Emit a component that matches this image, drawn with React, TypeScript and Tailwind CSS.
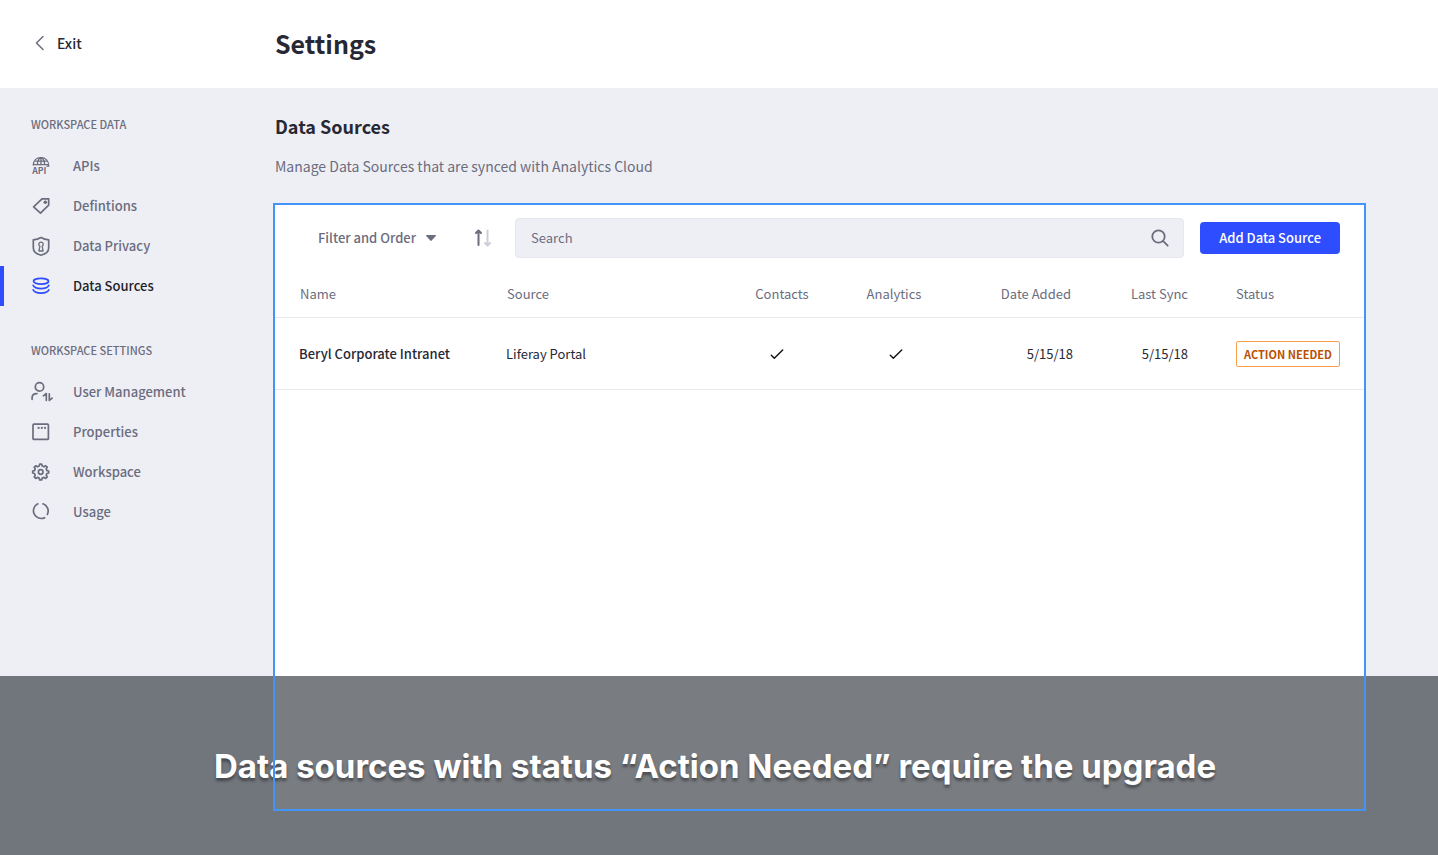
import type { ReactNode } from "react";

const strokeProps = {
  fill: "none",
  stroke: "currentColor",
  strokeWidth: 1.7,
  strokeLinecap: "round" as const,
  strokeLinejoin: "round" as const,
};

function Icon({ children }: { children: ReactNode }) {
  return (
    <svg width="24" height="24" viewBox="0 0 24 24" aria-hidden="true" className="shrink-0 overflow-visible" {...strokeProps}>
      {children}
    </svg>
  );
}

const ApiIcon = () => (
  <Icon>
    <g strokeWidth="1.3" strokeLinecap="butt">
      <path d="M4.2 11.4C4.2 6.6 7.5 3.7 12 3.7s7.8 3 7.8 8.5h-2.4" />
      <path d="M12 3.7v7.5M8.4 11.2c0-4 1.2-6.7 3.6-7.5M15.6 11.2c0-4-1.2-6.7-3.6-7.5M5.8 7.2h12.4M4.2 10.6h15.4" />
    </g>
    <text x="3.2" y="20" fill="currentColor" stroke="none" fontSize="8.6" fontWeight="700" className="font-['Noto_Sans_CJK_SC',sans-serif]">
      API
    </text>
  </Icon>
);

const TagIcon = () => (
  <Icon>
    <path d="M13 4.8h6.7v6.3l-8.2 8-6.900-6.300z" />
    <circle cx="16.3" cy="8.2" r="1.8" fill="currentColor" stroke="none" />
  </Icon>
);

const ShieldIcon = () => (
  <Icon>
    <path d="M12 3.5c2.4 1.5 5 2.2 7.7 2.3v8.1c0 3.7-3.3 6.1-7.7 7.3-4.4-1.2-7.7-3.6-7.7-7.3V5.8c2.7-.1 5.3-.8 7.700-2.300z" />
    <path d="M10.900 12.200a2.200 2.200 0 1 1 2.200 0l1 4.800H9.900z" strokeWidth="1.300" />
  </Icon>
);

const DatabaseIcon = () => (
  <Icon>
    <ellipse cx="12" cy="7.200" rx="7.500" ry="2.900" />
    <path d="M4.200 11.400c.9 2 3.800 3.200 7.800 3.200s6.900-1.200 7.800-3.200M4.200 15.900c.9 2 3.800 3.200 7.800 3.200s6.900-1.200 7.800-3.200" />
  </Icon>
);

const UserIcon = () => (
  <Icon>
    <circle cx="10.500" cy="6.900" r="4.200" />
    <path d="M3.100 19.300v-1.500c0-2.600 1.900-4.200 4.800-4.200" />
    <path d="M17.300 20.300v-6.800l-2.900 2.300M20.300 13.800v6.600l2.800-2.300" />
  </Icon>
);

const PropertiesIcon = () => (
  <Icon>
    <rect x="4" y="4.200" width="15.400" height="15.200" rx="1" />
    <g fill="currentColor" stroke="none">
      <circle cx="9.600" cy="7.900" r="1.100" />
      <circle cx="12.800" cy="7.900" r="1.100" />
      <circle cx="16" cy="7.900" r="1.100" />
    </g>
  </Icon>
);

const GearIcon = () => (
  <Icon>
    <g transform="translate(-.3 0)">
      <circle cx="12" cy="12" r="2.300" />
      <path d="M10.500 6 11 4.100h2l.5 1.900 1.800.8 1.700-1 1.500 1.400-1 1.700.7 1.700 1.800.4v2l-1.800.5-.7 1.700 1 1.700-1.500 1.500-1.700-1-1.800.7-.5 1.800h-2l-.5-1.800-1.800-.7-1.700 1-1.500-1.500 1-1.700-.7-1.700L4 13v-2l1.800-.4.7-1.700-1-1.700L7 5.800l1.700 1z" />
    </g>
  </Icon>
);

const UsageIcon = () => (
  <Icon>
    <path d="M8.800 3.800a7.700 7.700 0 1 0 6.800 13.900M14 3.800a7.700 7.700 0 0 1 4.400 10.600" />
  </Icon>
);

const CheckIcon = ({ label }: { label: string }) => (
  <svg width="14" height="12" viewBox="0 0 14 12" role="img" aria-label={label} className="inline-block" fill="none" stroke="#111" strokeWidth="1.400" strokeLinecap="round" strokeLinejoin="round">
    <path d="M1.300 6.300 4.300 9.200 12.700.9" />
  </svg>
);

type Item = { label: string; icon: () => ReactNode; active?: boolean };

const groups: { title: string; items: Item[] }[] = [
  {
    title: "WORKSPACE DATA",
    items: [
      { label: "APIs", icon: ApiIcon },
      { label: "Defintions", icon: TagIcon },
      { label: "Data Privacy", icon: ShieldIcon },
      { label: "Data Sources", icon: DatabaseIcon, active: true },
    ],
  },
  {
    title: "WORKSPACE SETTINGS",
    items: [
      { label: "User Management", icon: UserIcon },
      { label: "Properties", icon: PropertiesIcon },
      { label: "Workspace", icon: GearIcon },
      { label: "Usage", icon: UsageIcon },
    ],
  },
];

function Sidebar() {
  return (
    <nav aria-label="Settings" className="flex w-[275px] shrink-0 flex-col gap-9 pt-7">
      {groups.map((group) => (
        <section key={group.title}>
          <h3 className="mb-[14px] pl-[31px] text-[11px] leading-4 font-medium">{group.title}</h3>
          <ul>
            {group.items.map(({ label, icon: Glyph, active }) => (
              <li key={label}>
                <a
                  href="#"
                  aria-current={active ? "page" : undefined}
                  className={
                    active
                      ? "flex h-10 items-center gap-5 border-l-4 border-[#2e4dff] pl-[25px] text-[#2e4dff]"
                      : "flex h-10 items-center gap-5 border-l-4 border-transparent pl-[25px]"
                  }
                >
                  <Glyph />
                  <span className={active ? "text-[#1f1f2b]" : ""}>{label}</span>
                </a>
              </li>
            ))}
          </ul>
        </section>
      ))}
    </nav>
  );
}

function Toolbar() {
  return (
    <div className="flex items-center pt-[13px] pr-6 pb-[11px] pl-[43px]">
      <button type="button" className="flex items-center gap-[10px] font-medium whitespace-nowrap">
        Filter and Order
        <svg width="10" height="6" viewBox="0 0 10 6" fill="currentColor" aria-hidden="true">
          <path d="M.8 0h8.400c.7 0 1 .6.6 1.100L5.700 5.600a1 1 0 0 1-1.400 0L.2 1.100C-.2.6.1 0 .8 0z" />
        </svg>
      </button>
      <button type="button" aria-label="Sort order" className="ml-[38px]">
        <svg width="18" height="18" viewBox="0 0 18 18" fill="none" strokeWidth="2" strokeLinecap="round" strokeLinejoin="round">
          <path d="M4.500 16V2M2 4l2.500-2.500L7 4" stroke="#6b6c7e" />
          <path d="M13.500 1.500v14M11 14l2.500 2.500L16 14" stroke="#cdced9" />
        </svg>
      </button>
      <label className="ml-[23px] flex h-10 flex-1 items-center rounded-sm border border-[#e7e7ed] bg-[#eeeff4] pr-[14px] pl-[15px]">
        <span className="sr-only">Search</span>
        <input type="text" placeholder="Search" className="h-8 min-w-0 flex-1 bg-transparent leading-8 outline-none placeholder:text-[#6b6c7e]" />
        <svg width="18" height="18" viewBox="0 0 18 18" fill="none" stroke="currentColor" strokeWidth="1.800" strokeLinecap="round" aria-hidden="true">
          <circle cx="7.500" cy="7.500" r="6.200" />
          <path d="m12.200 12.200 4.500 4.500" />
        </svg>
      </label>
      <button type="button" className="ml-4 h-8 rounded-sm bg-[#2e4dff] px-[19px] font-medium whitespace-nowrap text-white">
        Add Data Source
      </button>
    </div>
  );
}

function SourcesTable() {
  return (
    <table className="w-full table-fixed">
      <colgroup>
        <col className="w-[231px]" />
        <col />
        <col className="w-[116px]" />
        <col className="w-[114px]" />
        <col className="w-[122px]" />
        <col className="w-[115px]" />
        <col className="w-[176px]" />
      </colgroup>
      <thead>
        <tr className="h-12 border-b border-[#e7e7ed] text-left *:pt-0.5 *:font-normal">
          <th scope="col" className="pl-[25px]">Name</th>
          <th scope="col" className="pl-px">Source</th>
          <th scope="col" className="pl-1.5 text-center">Contacts</th>
          <th scope="col" className="text-center">Analytics</th>
          <th scope="col" className="pr-0.5 text-right">Date Added</th>
          <th scope="col" className="text-right">Last Sync</th>
          <th scope="col" className="pl-12">Status</th>
        </tr>
      </thead>
      <tbody>
        <tr className="h-[72px] border-b border-[#e7e7ed] text-[#272833] *:pt-0.5">
          <td className="pl-6 font-medium">Beryl Corporate Intranet</td>
          <td>Liferay Portal</td>
          <td className="pr-1 text-center">
            <CheckIcon label="Contacts synced" />
          </td>
          <td className="pl-1 text-center">
            <CheckIcon label="Analytics synced" />
          </td>
          <td className="text-right">5/15/18</td>
          <td className="text-right">5/15/18</td>
          <td className="pl-12">
            <span className="inline-block rounded-xs border border-[#f9a04f] px-[7px] text-[11px] leading-6 font-bold whitespace-nowrap text-[#b95000]">
              ACTION NEEDED
            </span>
          </td>
        </tr>
      </tbody>
    </table>
  );
}

export default function App() {
  return (
    <div className="relative flex min-h-screen flex-col bg-[#eeeff4] font-['Noto_Sans_CJK_SC','Noto_Sans',sans-serif] text-[13px] leading-5 font-medium text-[#6b6c7e]">
      <header className="flex h-[88px] items-center bg-white text-[#272833]">
        <div className="w-[275px] shrink-0 pl-[35px]">
          <a href="#" className="inline-flex items-center gap-3 text-[14px]">
            <svg width="10" height="16" viewBox="0 0 10 16" fill="none" stroke="#6b6c7e" strokeWidth="1.500" strokeLinecap="round" strokeLinejoin="round" aria-hidden="true">
              <path d="M8 1.500 1.500 8 8 14.500" />
            </svg>
            Exit
          </a>
        </div>
        <h1 className="pb-0.5 text-[25px] leading-8 font-bold">Settings</h1>
      </header>

      <div className="flex flex-1">
        <Sidebar />
        <main className="flex min-w-0 flex-1 flex-col pt-6 pr-[72px] pb-11 font-normal">
          <h2 className="text-[18px] leading-7 font-bold text-[#272833]">Data Sources</h2>
          <p className="mt-[14px] mb-[25px] text-[14px] leading-6">Manage Data Sources that are synced with Analytics Cloud</p>
          <section aria-label="Data sources" className="relative -ml-0.5 flex-1 bg-white p-0.5">
            <Toolbar />
            <SourcesTable />
            <div className="pointer-events-none absolute inset-0 z-20 border-2 border-[#4295f7]" />
          </section>
        </main>
      </div>

      <div className="absolute inset-x-0 bottom-0 z-10 flex h-[179px] items-center justify-center bg-[#0b101a]/55 font-['Inter',sans-serif] text-[33px] leading-10 font-bold text-white">
        <p className="pr-2 [text-shadow:0_3px_3px_rgb(0_0_0/0.4)]">Data sources with status “Action Needed” require the upgrade</p>
      </div>
    </div>
  );
}
